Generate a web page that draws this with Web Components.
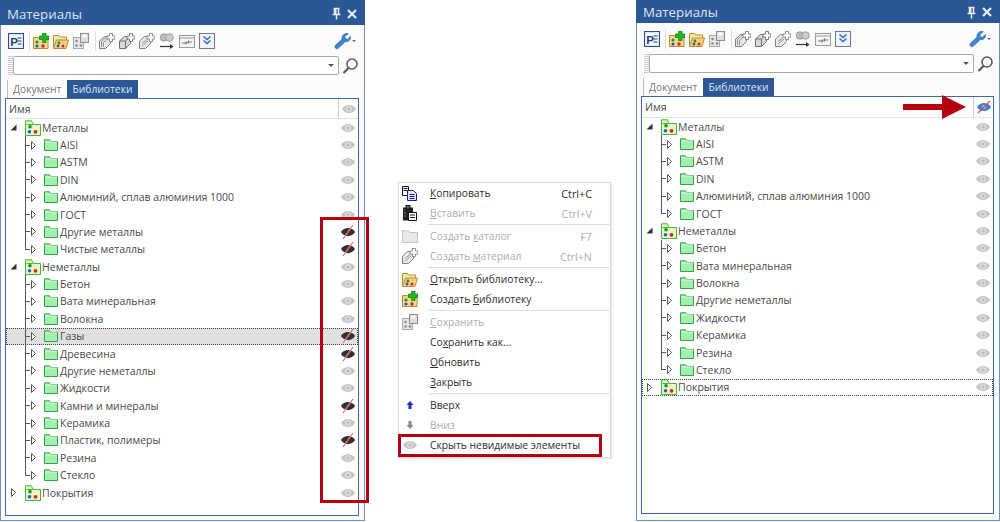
<!DOCTYPE html>
<html lang="ru">
<head>
<meta charset="utf-8">
<title>Материалы</title>
<style>
    html, body { margin: 0; background: #fff; }
    body {
        position: relative;
        width: 1000px;
        height: 522px;
        overflow: hidden;
        font-family: "Open Sans", "Noto Sans", sans-serif;
    }
    .page { display: flex; align-items: flex-start; }
</style>
</head>
<body>
<div class="page">
    <material-panel variant="tall" hdr-eye="eye">
        <tree-row root open>Металлы</tree-row>
        <tree-row>AISI</tree-row>
        <tree-row>ASTM</tree-row>
        <tree-row>DIN</tree-row>
        <tree-row>Алюминий, сплав алюминия 1000</tree-row>
        <tree-row>ГОСТ</tree-row>
        <tree-row off>Другие металлы</tree-row>
        <tree-row off last>Чистые металлы</tree-row>
        <tree-row root open>Неметаллы</tree-row>
        <tree-row>Бетон</tree-row>
        <tree-row>Вата минеральная</tree-row>
        <tree-row>Волокна</tree-row>
        <tree-row off selected>Газы</tree-row>
        <tree-row off>Древесина</tree-row>
        <tree-row>Другие неметаллы</tree-row>
        <tree-row>Жидкости</tree-row>
        <tree-row off>Камни и минералы</tree-row>
        <tree-row>Керамика</tree-row>
        <tree-row off>Пластик, полимеры</tree-row>
        <tree-row>Резина</tree-row>
        <tree-row last>Стекло</tree-row>
        <tree-row root>Покрытия</tree-row>
    </material-panel>

    <context-menu>
        <menu-item icon="copy" keys="Ctrl+C"><u>К</u>опировать</menu-item>
        <menu-item icon="paste" keys="Ctrl+V" disabled><u>В</u>ставить</menu-item>
        <menu-sep></menu-sep>
        <menu-item icon="foldergray" keys="F7" disabled>Создать <u>к</u>аталог</menu-item>
        <menu-item icon="mat3" keys="Ctrl+N" disabled>Создать <u>м</u>атериал</menu-item>
        <menu-sep></menu-sep>
        <menu-item icon="libopen"><u>О</u>ткрыть библиотеку...</menu-item>
        <menu-item icon="libadd">Создать <u>б</u>иблиотеку</menu-item>
        <menu-sep></menu-sep>
        <menu-item icon="libsave" disabled><u>С</u>охранить</menu-item>
        <menu-item>Со<u>х</u>ранить как...</menu-item>
        <menu-item><u>О</u>бновить</menu-item>
        <menu-item><u>З</u>акрыть</menu-item>
        <menu-sep></menu-sep>
        <menu-item icon="up">Вверх</menu-item>
        <menu-item icon="down" disabled>Вниз</menu-item>
        <menu-item icon="eye">Скрыть невидимые элементы</menu-item>
    </context-menu>

    <material-panel variant="short" hdr-eye="eyeblue">
        <tree-row root open>Металлы</tree-row>
        <tree-row>AISI</tree-row>
        <tree-row>ASTM</tree-row>
        <tree-row>DIN</tree-row>
        <tree-row>Алюминий, сплав алюминия 1000</tree-row>
        <tree-row last>ГОСТ</tree-row>
        <tree-row root open>Неметаллы</tree-row>
        <tree-row>Бетон</tree-row>
        <tree-row>Вата минеральная</tree-row>
        <tree-row>Волокна</tree-row>
        <tree-row>Другие неметаллы</tree-row>
        <tree-row>Жидкости</tree-row>
        <tree-row>Керамика</tree-row>
        <tree-row>Резина</tree-row>
        <tree-row last>Стекло</tree-row>
        <tree-row root focused>Покрытия</tree-row>
    </material-panel>
</div>

<!-- red marks drawn over the screenshot -->
<red-frame style="left:320px;top:217px;width:49px;height:286px"></red-frame>
<red-frame style="left:398px;top:434px;width:204px;height:23px"></red-frame>
<red-arrow style="left:903px;top:95px"></red-arrow>

<script>
const PLUS = (c) => `<path d="M10.5 .5v2.500H8v3h2.500v2.500h3V6H16V3h-2.500V.5z" fill="#fff" stroke="${c}" stroke-width=".9"/>`;
const EYE_SHAPE = 'M1 7C4 1.500 12 1.500 15 7 12 12.500 4 12.500 1 7z';

const ICONS = {
    pe: `<rect x=".5" y=".5" width="15" height="15" fill="#dce6f4" stroke="#2a4f8e"/><rect x="2" y="2" width="12" height="12" fill="#f4f7fb"/><text x="2.200" y="12.600" font-family="Liberation Sans" font-weight="700" font-size="11.500" fill="#1f3f7c">P</text><path d="M9.500 5h4M9.500 8h4M9.500 11h4" stroke="#1f3f7c" stroke-width="1.200"/>`,
    libadd: `<path d="M.5 4.500h5l1 1.500h8.500v9.500H.5z" fill="#f6d98e" stroke="#b98c2c"/><path d="M9.500 0h3.500v3h3v3.500h-3v3H9.500v-3h-3V3h3z" fill="#23b723" stroke="#0d7d0d" stroke-width=".7"/><circle cx="4" cy="9" r="1.600" fill="#1a9a1a"/><circle cx="4" cy="13" r="1.600" fill="#2455d8"/><circle cx="10" cy="13" r="1.700" fill="#dc2020"/>`,
    libopen: `<path d="M.5 14.500v-12h5l1 1.500h7v3" fill="#f8e7b0" stroke="#b98c2c"/><path d="M.5 15.500l3-8.500h12l-2.500 8.500z" fill="#f5d27c" stroke="#b98c2c"/><circle cx="6" cy="10" r="1.400" fill="#1a9a1a"/><circle cx="5" cy="13" r="1.400" fill="#2455d8"/><circle cx="10" cy="13" r="1.500" fill="#dc2020"/>`,
    libsave: `<rect x=".5" y="4.500" width="10" height="11" fill="#e6e6e6" stroke="#aaa"/><rect x="7.500" y=".5" width="8" height="9" fill="#ddd" stroke="#8c8c8c"/><rect x="9.500" y="1.500" width="4" height="3" fill="#fff"/><circle cx="3.500" cy="8" r="1.300" fill="#888"/><circle cx="3.500" cy="12.500" r="1.300" fill="#888"/><circle cx="8" cy="12.500" r="1.300" fill="#888"/>`,
    mat1: `<path d="M.5 8l5-4.500h6v7l-5 5H.5z" fill="#e6e6e6" stroke="#7c7c7c"/><path d="M2.500 14V8.500l5-4.500M4.500 14V9.500l5-4.500" fill="none" stroke="#7c7c7c" stroke-width=".8"/>` + PLUS('#7c7c7c'),
    mat2: `<path d="M.5 8l5-4.500h6v7l-5 5H.5z" fill="#d8d8d8" stroke="#707070"/><path d="M.5 8h6v7.500M6.500 8l5-4.500" fill="none" stroke="#707070"/>` + PLUS('#707070'),
    mat3: `<path d="M.5 15.500V8l5-4.500h6v7l-5 5z" fill="#e8e8e8" stroke="#828282"/><path d="M3 13l6-5M3 10.500l5-4" stroke="#828282" fill="none" stroke-width=".8"/>` + PLUS('#828282'),
    link: `<circle cx="5" cy="4.500" r="3.800" fill="#bbb" stroke="#8c8c8c" stroke-width=".7"/><circle cx="10.500" cy="4.500" r="3.800" fill="#ccc" stroke="#8c8c8c" stroke-width=".7"/><path d="M1 13.500h12" stroke="#333" stroke-width="1.200"/><path d="M11 11l3.500 2.500L11 16z" fill="#333"/>`,
    swap: `<rect x=".5" y="2.500" width="15" height="12" fill="#f5f5f5" stroke="#9a9a9a"/><path d="M.5 5h15" stroke="#9a9a9a"/><path d="M3 10h4M13 9H9" stroke="#777"/><path d="M6.500 8l2 2-2 2zM10 7l-2 2 2 2z" fill="#777"/>`,
    expand: `<rect x=".5" y=".5" width="15" height="15" fill="#f0f3f8" stroke="#6c7a92"/><path d="M4.500 3.500L8 6.500l3.500-3M4.500 7.500L8 10.500l3.500-3" fill="none" stroke="#2d6bd0" stroke-width="1.500"/>`,
    wrench: `<path d="M13.500 1.500l-3 2.500.5 2 2 .5 2.500-2.500c.5 3-2 5-4.500 4.500L4.500 14.500c-1.500 1-3.500-.5-2.500-2.500L8 6.500C7.500 3 10.500.5 13.500 1.500z" fill="#3f86cf" stroke="#1f5f9f" stroke-width=".6"/>`,
    search: `<circle cx="10" cy="6" r="5" fill="#fff" stroke="#555" stroke-width="1.500"/><path d="M6.500 10L1.500 15" stroke="#555" stroke-width="2.200"/>`,
    pin: `<path d="M3.500 1.500h6M4.500 1.500v5.500M8.500 1.500v5.500M2.500 7.500h8M6.500 7.500v5" fill="none" stroke="#e6edf7" stroke-width="1.500"/><rect x="4.500" y="2" width="2" height="5" fill="#e6edf7"/>`,
    close: `<path d="M2 2l8 8M10 2l-8 8" stroke="#e6edf7" stroke-width="2.200"/>`,
    root: `<path d="M.5 15.500V.8h6l1.500 3.700h7.500v11z" fill="#e7f7c6" stroke="#43b53f"/><path d="M1.500 4.500h6" stroke="#43b53f"/><circle cx="5" cy="6.800" r="1.800" fill="#109a10"/><circle cx="4.500" cy="11.800" r="1.800" fill="#1d5fe0"/><circle cx="10.500" cy="11.800" r="1.900" fill="#e02020"/>`,
    folder: `<path d="M.5 11.500V.8h5l1.200 1.700h6.800v9z" fill="#a2f0b0" stroke="#2fa63f"/><path d="M1 3h12" stroke="#dff8e2"/>`,
    foldergray: `<path d="M.5 14.500V2.800h6l1.200 1.700h7.800v10z" fill="#e9e9e9" stroke="#c4c4c4"/>`,
    eye: `<path d="${EYE_SHAPE}" fill="#c6c6c6"/><circle cx="8" cy="7" r="2.800" fill="#e6e6e6"/><circle cx="8" cy="7" r="1.800" fill="#bcbcbc"/>`,
    eyeoff: `<path d="${EYE_SHAPE}" fill="#303030"/><path d="M3 14L13 0" stroke="#fff" stroke-width="1.600" opacity=".6"/><path d="M3 14L13 0" stroke="#f03838"/>`,
    eyeblue: `<path d="${EYE_SHAPE}" fill="#3c82d0"/><circle cx="8" cy="7" r="2" fill="#9cc4ec"/><path d="M2 13L14 1" stroke="#f03838" stroke-width="1.100"/>`,
    copy: `<path d="M.5 1.500h6v9h-6z" fill="#fff" stroke="#111"/><path d="M1.500 3.500h4M1.500 5.500h4" stroke="#111"/><path d="M5.500 5.500h6l3 3v7h-9z" fill="#dfe6ff" stroke="#1c1c8c"/><path d="M7.500 9.500h5M7.500 11.500h5M7.500 13.500h5" stroke="#1c1c8c"/>`,
    paste: `<rect x="1" y="2.500" width="10" height="13" fill="#222"/><rect x="4" y=".5" width="4" height="3.500" fill="#666" stroke="#111"/><path d="M6.500 7.500h8v8h-8z" fill="#fff" stroke="#111"/><path d="M8 10h5M8 12.500h5" stroke="#111"/><path d="M2 5h1M2 8h2M2 11h2" stroke="#888"/>`,
    up: `<path d="M8 4l3.500 4H9.500v4h-3V8H4.500z" fill="#1f2fd0"/>`,
    down: `<path d="M8 12l3.500-4H9.500V4h-3v4H4.500z" fill="#888"/>`
};

// one svg icon, picked by name from ICONS
class UiIcon extends HTMLElement {
    connectedCallback() {
        const w = this.getAttribute('w') || 16;
        const h = this.getAttribute('h') || w;
        const vb = this.getAttribute('vb') || `0 0 ${w} ${h}`;
        this.attachShadow({ mode: 'open' }).innerHTML = `
            <style>:host{display:inline-flex;flex:none} svg{display:block}</style>
            <svg width="${w}" height="${h}" viewBox="${vb}">${ICONS[this.getAttribute('name')] || ''}</svg>`;
    }
}
customElements.define('ui-icon', UiIcon);

const rowTemplate = document.createElement('template');
rowTemplate.innerHTML = `
    <style>
    :host {
        display: flex;
        align-items: center;
        height: 17.38px;
        font-size: 10.5px;
        color: #4a4a4a;
        white-space: nowrap;
    }
    :host([selected]) { background: #e0e0e0; outline: 1px dotted #444; outline-offset: -1px; }
    :host([focused]) { outline: 1px dotted #444; outline-offset: -1px; }
    .exp { flex: none; display: flex; }
    .label { flex: 1; }
    .eye { flex: none; margin-right: 2px; }

    .root { padding-left: 3px; }
    .root .exp { width: 16px; }
    .root .pic { margin-right: 1px; }

    /* guide line of the children is painted as a background */
    .child {
        padding-left: 23px;
        background:
            linear-gradient(#555, #555) no-repeat 19px 0 / 1px 100%,
            linear-gradient(#555, #555) no-repeat 19px 50% / 5px 1px;
    }
    :host([last]) .child {
        background:
            linear-gradient(#555, #555) no-repeat 19px 0 / 1px 50%,
            linear-gradient(#555, #555) no-repeat 19px 50% / 5px 1px;
    }
    .child .exp { width: 15px; }
    .child .pic { margin-right: 2px; }
    .line { display: flex; align-items: center; flex: 1; min-width: 0; height: 100%; }
    </style>
    <div class="line">
        <span class="exp"></span>
        <ui-icon class="pic"></ui-icon>
        <span class="label"><slot></slot></span>
        <ui-icon class="eye" w="16" h="14"></ui-icon>
    </div>
`;

class TreeRow extends HTMLElement {
    connectedCallback() {
        const root = this.attachShadow({ mode: 'open' });
        const body = rowTemplate.content.cloneNode(true);
        const isRoot = this.hasAttribute('root');
        body.querySelector('.line').classList.add(isRoot ? 'root' : 'child');
        body.querySelector('.eye').setAttribute('name', this.hasAttribute('off') ? 'eyeoff' : 'eye');
        const pic = body.querySelector('.pic');
        if (isRoot) {
            pic.setAttribute('name', 'root');
        } else {
            pic.setAttribute('name', 'folder');
            pic.setAttribute('w', 14);
            pic.setAttribute('h', 12);
        }
        // the expander: filled corner when open, hollow arrow when closed
        body.querySelector('.exp').innerHTML = this.hasAttribute('open')
            ? `<svg width="9" height="9"><path d="M7.500 1.500v6h-6z" fill="#333"/></svg>`
            : `<svg width="9" height="9"><path d="M2.500 .5l4 4-4 4z" fill="#fff" stroke="#555"/></svg>`;
        root.appendChild(body);
    }
}
customElements.define('tree-row', TreeRow);

const panelTemplate = document.createElement('template');
panelTemplate.innerHTML = `
    <style>
    :host {
        display: flex;
        flex-direction: column;
        flex: none;
        box-sizing: border-box;
        width: 365px;
        height: 521px;
        background: #fbfbfb;
        border: 1px solid #6f8fbf;
        border-top: 0;
    }
    :host([variant=short]) { width: 364px; margin-left: 25px; }
    .title {
        display: flex;
        align-items: center;
        flex: none;
        box-sizing: border-box;
        height: 25px;
        margin: 0 -1px;
        padding: 2px 7px 0 7px;
        background: #2b5797;
        color: #dce6f3;
        font-size: 13.3px;
    }
    :host([variant=short]) .title { height: 23px; padding-top: 1px; }
    .title span { flex: 1; }
    .pin { margin-right: 3px; }
    .tools {
        display: flex;
        align-items: center;
        flex: none;
        box-sizing: border-box;
        height: 31px;
        padding: 1px 0 0 7px;
    }
    .tools .btn { width: 20px; display: flex; justify-content: center; }
    .tools .first { width: 17px; justify-content: flex-start; }
    .sep { width: 1px; height: 20px; background: #ddd; margin: 0 1px 0 4px; }
    .tools .wrench { margin-left: auto; margin-right: 8px; display: flex; align-items: center; }
    .caret { width: 0; height: 0; border: 2px solid transparent; border-top: 2px solid #666; margin: 2px 0 0 1px; }
    .searchrow {
        display: flex;
        flex: none;
        height: 24px;
        padding: 0 6px 0 7px;
    }
    .grip {
        width: 5px;
        height: 19px;
        background: repeating-linear-gradient(0deg, #ccc 0 1px, transparent 1px 2px);
    }
    .combo {
        flex: 1;
        height: 19px;
        box-sizing: border-box;
        border: 1px solid #a9a9a9;
        border-radius: 2px;
        background: #fff;
        display: flex;
        align-items: center;
        justify-content: flex-end;
        padding-right: 4px;
    }
    .combo i { border: 3px solid transparent; border-top: 3px solid #555; margin-top: 3px; }
    .searchrow ui-icon { margin: 2px 0 0 3px; }
    .tabs {
        display: flex;
        flex: none;
        height: 18px;
        padding-left: 6px;
        font-size: 10.3px;
    }
    .tabs span { display: flex; align-items: center; padding: 0 5px; }
    .tabs .doc { color: #777; border-left: 1px solid #bbb; background: #fdfdfd; }
    .tabs .lib { color: #dce6f3; background: #2b5797; margin-left: 1px; }
    .tree {
        flex: 1;
        margin: 0 5px 4px 4px;
        box-sizing: border-box;
        border: 1px solid #3f68a8;
        background: #fff;
    }
    :host([variant=short]) .tree { margin-bottom: 6px; }
    .head {
        display: flex;
        align-items: center;
        height: 20px;
        box-sizing: border-box;
        border-bottom: 1px solid #e2e2e2;
        padding-left: 3px;
        font-size: 10.5px;
        color: #4a4a4a;
    }
    :host([variant=short]) .head { height: 21px; }
    .head span { flex: 1; }
    .head .col {
        width: 19px;
        height: 100%;
        border-left: 1px solid #ccc;
        display: flex;
        align-items: center;
        justify-content: center;
    }
    </style>
    <div class="title">
        <span>Материалы</span>
        <ui-icon class="pin" name="pin" w="13"></ui-icon>
        <ui-icon name="close" w="12"></ui-icon>
    </div>
    <div class="tools">
        <div class="btn first"><ui-icon name="pe"></ui-icon></div>
        <div class="sep"></div>
        <div class="btn"><ui-icon name="libadd"></ui-icon></div>
        <div class="btn"><ui-icon name="libopen"></ui-icon></div>
        <div class="btn"><ui-icon name="libsave"></ui-icon></div>
        <div class="sep"></div>
        <div class="btn"><ui-icon name="mat1"></ui-icon></div>
        <div class="btn"><ui-icon name="mat2"></ui-icon></div>
        <div class="btn"><ui-icon name="mat3"></ui-icon></div>
        <div class="btn"><ui-icon name="link"></ui-icon></div>
        <div class="btn"><ui-icon name="swap"></ui-icon></div>
        <div class="btn"><ui-icon name="expand"></ui-icon></div>
        <div class="wrench"><ui-icon name="wrench" w="18" h="18" vb="0 0 16 16"></ui-icon><div class="caret"></div></div>
    </div>
    <div class="searchrow">
        <div class="grip"></div>
        <div class="combo"><i></i></div>
        <ui-icon name="search"></ui-icon>
    </div>
    <div class="tabs">
        <span class="doc">Документ</span>
        <span class="lib">Библиотеки</span>
    </div>
    <div class="tree">
        <div class="head">
            <span>Имя</span>
            <div class="col"><ui-icon class="hdr" w="16" h="14"></ui-icon></div>
        </div>
        <slot></slot>
    </div>
`;

class MaterialPanel extends HTMLElement {
    connectedCallback() {
        const root = this.attachShadow({ mode: 'open' });
        const body = panelTemplate.content.cloneNode(true);
        body.querySelector('.hdr').setAttribute('name', this.getAttribute('hdr-eye'));
        root.appendChild(body);
    }
}
customElements.define('material-panel', MaterialPanel);

class ContextMenu extends HTMLElement {
    constructor() {
        super();
        this.attachShadow({ mode: 'open' }).innerHTML = `
            <style>
            :host {
                display: block;
                flex: none;
                box-sizing: border-box;
                width: 213px;
                height: 276px;
                margin: 182px 0 0 33px;
                background: #fff;
                border: 1px solid #dcdcdc;
                box-shadow: 1px 1px 2px rgba(0,0,0,.12);
            }
            </style>
            <slot></slot>`;
    }
}
customElements.define('context-menu', ContextMenu);

class MenuItem extends HTMLElement {
    connectedCallback() {
        const icon = this.getAttribute('icon');
        const keys = this.getAttribute('keys');
        this.attachShadow({ mode: 'open' }).innerHTML = `
            <style>
            :host {
                display: flex;
                align-items: center;
                height: 20px;
                font-size: 10.3px;
                color: #2e2e2e;
                white-space: nowrap;
            }
            :host([disabled]) { color: #aeaeae; }
            .pic { width: 22px; flex: none; display: flex; justify-content: center; margin-right: 9px; }
            .text { flex: 1; }
            .keys { padding-right: 18px; font-size: 10.8px; }
            </style>
            <span class="pic">${icon ? `<ui-icon name="${icon}" ${icon === 'eye' ? 'w="16" h="14"' : ''}></ui-icon>` : ''}</span>
            <span class="text"><slot></slot></span>
            ${keys ? `<span class="keys">${keys}</span>` : ''}`;
    }
}
customElements.define('menu-item', MenuItem);

class MenuSep extends HTMLElement {
    constructor() {
        super();
        this.attachShadow({ mode: 'open' }).innerHTML = `
            <style>
            :host { display: block; height: 1px; margin: 1px 0 1px 29px; background: #dedede; }
            </style>`;
    }
}
customElements.define('menu-sep', MenuSep);

class RedFrame extends HTMLElement {
    constructor() {
        super();
        this.attachShadow({ mode: 'open' }).innerHTML = `
            <style>
            :host { position: absolute; box-sizing: border-box; border: 3px solid #b5000f; }
            </style>`;
    }
}
customElements.define('red-frame', RedFrame);

class RedArrow extends HTMLElement {
    constructor() {
        super();
        this.attachShadow({ mode: 'open' }).innerHTML = `
            <style>
            :host { position: absolute; display: block; width: 64px; height: 24px; }
            svg { display: block; }
            </style>
            <svg width="64" height="24"><path d="M0 9h39V0l24 12-24 12v-9H0z" fill="#b5000f"/></svg>`;
    }
}
customElements.define('red-arrow', RedArrow);
</script>
</body>
</html>
